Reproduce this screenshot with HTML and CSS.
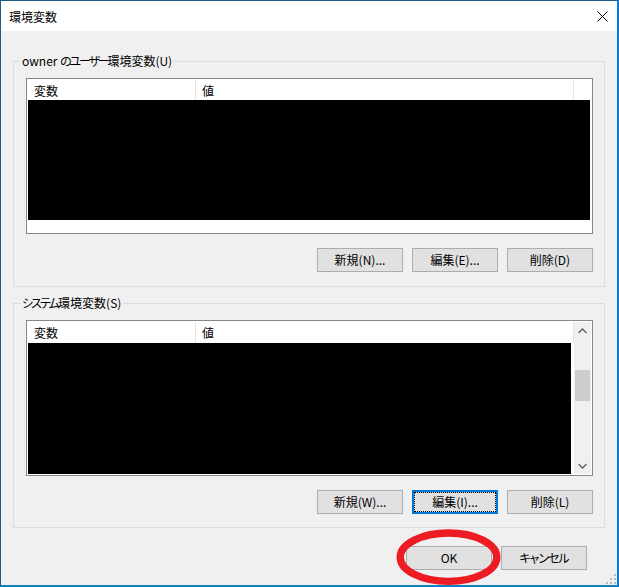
FILE: index.html
```html
<!DOCTYPE html>
<html lang="ja">
<head>
<meta charset="utf-8">
<title>環境変数</title>
<link rel="stylesheet" href="styles.css">
</head>
<body>
<div class="window">
  <div class="titlebar">
    <span class="title">環境変数</span>
    <svg class="close" width="11" height="11" viewBox="0 0 11 11"><path d="M0.5 0.5 L10.5 10.5 M10.5 0.5 L0.5 10.5" stroke="#000" stroke-width="1" fill="none"/></svg>
  </div>
  <div class="content">
    <div class="group group-user">
      <span class="group-label">owner <span class="kana">のユーザー</span>環境変数(U)</span>
      <div class="list">
        <div class="list-main">
          <div class="list-header">
            <span class="col col-name">変数</span>
            <span class="col col-value">値</span>
            <span class="col col-rest"></span>
          </div>
          <div class="redacted redacted-user"></div>
        </div>
      </div>
      <div class="btn-row">
        <button class="btn">新規(N)...</button>
        <button class="btn">編集(E)...</button>
        <button class="btn">削除(D)</button>
      </div>
    </div>

    <div class="group group-system">
      <span class="group-label"><span class="kana kana-sys">システム</span>環境変数(S)</span>
      <div class="list list-system">
        <div class="list-main">
          <div class="list-header">
            <span class="col col-name">変数</span>
            <span class="col col-value">値</span>
          </div>
          <div class="redacted redacted-system"></div>
        </div>
        <div class="scrollbar">
          <div class="sb-btn"><svg width="9" height="6" viewBox="0 0 9 6"><path d="M0.5 5 L4.5 1 L8.5 5" stroke="#606060" stroke-width="1.3" fill="none"/></svg></div>
          <div class="sb-track"><div class="sb-thumb"></div></div>
          <div class="sb-btn"><svg width="9" height="6" viewBox="0 0 9 6"><path d="M0.5 1 L4.5 5 L8.5 1" stroke="#606060" stroke-width="1.3" fill="none"/></svg></div>
        </div>
      </div>
      <div class="btn-row">
        <button class="btn">新規(W)...</button>
        <button class="btn btn-focus">編集(I)...</button>
        <button class="btn">削除(L)</button>
      </div>
    </div>

    <div class="dialog-buttons">
      <span class="ok-wrap">
        <button class="btn">OK</button>
        <svg class="mark" width="105" height="57" viewBox="0 0 105 57"><ellipse cx="52.5" cy="28.2" rx="48.3" ry="24.2" fill="none" stroke="#ed1c24" stroke-width="7.4"/></svg>
      </span>
      <button class="btn btn-kana">キャンセル</button>
    </div>
  </div>
  <svg class="grip" width="12" height="12" viewBox="0 0 12 12">
    <rect x="9" y="1" width="2" height="2" fill="#b9b9b9"/>
    <rect x="5" y="5" width="2" height="2" fill="#b9b9b9"/>
    <rect x="9" y="5" width="2" height="2" fill="#b9b9b9"/>
    <rect x="1" y="9" width="2" height="2" fill="#b9b9b9"/>
    <rect x="5" y="9" width="2" height="2" fill="#b9b9b9"/>
    <rect x="9" y="9" width="2" height="2" fill="#b9b9b9"/>
  </svg>
</div>
</body>
</html>
```

FILE: styles.css
```css
* { box-sizing: border-box; }

html, body {
  margin: 0;
  padding: 0;
  background: #f0f0f0;
}

body {
  font-family: "Noto Sans CJK JP", "Noto Sans", sans-serif;
  font-size: 12px;
  color: #000;
}

.window {
  position: relative;
  width: 619px;
  height: 587px;
  display: flex;
  flex-direction: column;
  background: #f0f0f0;
  border-top: 1px solid #1b5d86;
  border-left: 1px solid #1b5d86;
  border-right: 2px solid #1177cc;
  border-bottom: 2px solid #1380c4;
}

.titlebar {
  height: 30px;
  flex: none;
  display: flex;
  align-items: center;
  background: #fff;
  padding: 0 9px 0 8px;
}

.title {
  line-height: 17px;
  font-size: 12px;
}

.close {
  margin-left: auto;
  display: block;
}

.content {
  flex: 1;
  display: flex;
  flex-direction: column;
  padding: 30px 12px 0 12px;
}

.group {
  position: relative;
  border: 1px solid #dcdcdc;
  padding: 16px 11px 14px 12px;
}

.group-system {
  margin-top: 16px;
  padding-bottom: 13px;
}

.group-label {
  position: absolute;
  top: -8px;
  left: 6px;
  padding: 0 2px;
  line-height: 14px;
  background: #f0f0f0;
  white-space: nowrap;
}

.kana {
  font-feature-settings: "palt";
  letter-spacing: -2.2px;
}

.kana-sys {
  letter-spacing: -1.9px;
}

.list {
  height: 156px;
  border: 1px solid #828790;
  background: #fff;
  padding: 1px;
  display: flex;
}

.list-main {
  flex: 1;
  display: flex;
  flex-direction: column;
  min-width: 0;
}

.list-header {
  height: 20px;
  flex: none;
  display: flex;
}

.list-system .list-header {
  height: 21px;
}

.col {
  padding-top: 4px;
  line-height: 14px;
}

.col-name {
  width: 168px;
  padding-left: 6px;
  border-right: 1px solid #e5e5e5;
}

.col-value {
  width: 378px;
  padding-left: 6px;
  border-right: 1px solid #e5e5e5;
}

.list-system .col-value {
  flex: 1;
  width: auto;
}

.col-rest {
  flex: 1;
}

.redacted {
  background: #000;
}

.redacted-user {
  height: 120px;
  margin-right: 1px;
}

.redacted-system {
  flex: 1;
  margin-right: 3px;
}

.scrollbar {
  width: 17px;
  flex: none;
  background: #f0f0f0;
  display: flex;
  flex-direction: column;
}

.sb-btn {
  height: 17px;
  display: flex;
  align-items: center;
  justify-content: center;
}

.sb-btn svg {
  display: block;
}

.sb-track {
  flex: 1;
  padding: 31px 1px 0 1px;
}

.sb-thumb {
  height: 31px;
  background: #cdcdcd;
}

.btn-row {
  margin-top: 14px;
  display: flex;
  justify-content: flex-end;
  gap: 9px;
}

.btn {
  position: relative;
  width: 86px;
  height: 24px;
  padding: 0;
  margin: 0;
  border: 1px solid #adadad;
  background: #e1e1e1;
  font-family: "Noto Sans CJK JP", "Noto Sans", sans-serif;
  font-size: 12px;
  line-height: 22px;
  color: #000;
  text-align: center;
}

.btn-focus {
  border: 2px solid #0078d7;
  line-height: 20px;
}

.btn-focus::after {
  content: "";
  position: absolute;
  inset: 0;
  border: 1px dotted #000;
}

.btn-kana {
  font-feature-settings: "palt";
  letter-spacing: -1px;
}

.dialog-buttons {
  margin-top: 18px;
  padding-right: 18px;
  display: flex;
  justify-content: flex-end;
  gap: 9px;
}

.ok-wrap {
  position: relative;
  display: block;
}

.ok-wrap .btn {
  display: block;
}

.mark {
  position: absolute;
  left: -10px;
  top: -17px;
  pointer-events: none;
}

.grip {
  position: absolute;
  right: 0;
  bottom: 0;
  display: block;
}
```
